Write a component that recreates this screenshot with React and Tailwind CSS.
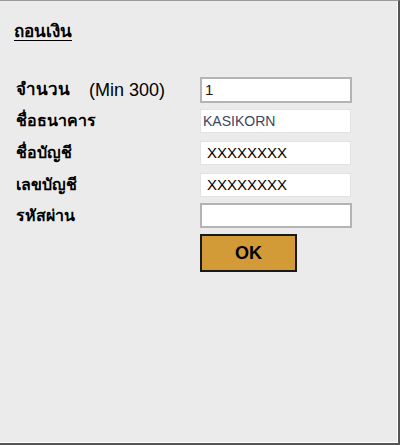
export default function App() {
  const font = { fontFamily: '"Liberation Sans", Tahoma, "Noto Sans", "DejaVu Sans", sans-serif' };
  return (
    <div
      className="w-[400px] h-[445px] bg-[#ebebeb] border-t border-t-[#9a9a9a] border-r-2 border-b-2 border-r-[#555] border-b-[#555] text-black"
      style={font}
    >
      <div className="w-full h-full border-r border-b border-white">
        <div className="pt-[19px] pl-[14px]">
          <span className="text-[17px] leading-[20px] font-bold underline underline-offset-[3px]">ถอนเงิน</span>
        </div>

        <div className="mt-[33px] flex flex-col">
          <Row label={<><span className="text-[17px]">จำนวน</span><span className="font-normal text-[18px] ml-[19px]">(Min 300)</span></>} h="h-[26px]">
            <div className="w-[152px] h-[26px] bg-white border-2 border-[#b4b4b4] pl-[3px] flex items-center text-[15px] text-[#2a0f0f]">1</div>
          </Row>
          <Row label="ชื่อธนาคาร" h="h-[24px]" mt="mt-[6px]">
            <div className="w-[151px] h-[24px] bg-white border border-[#e2e2e2] pl-[2px] flex items-center text-[14px] text-[#3b4763]">KASIKORN</div>
          </Row>
          <Row label="ชื่อบัญชี" h="h-[24px]" mt="mt-[8px]">
            <div className="w-[151px] h-[24px] bg-white border border-[#e2e2e2] pl-[6px] flex items-center text-[15px]">XXXXXXXX</div>
          </Row>
          <Row label="เลขบัญชี" h="h-[24px]" mt="mt-[8px]">
            <div className="w-[151px] h-[24px] bg-white border border-[#e2e2e2] pl-[6px] flex items-center text-[15px]">XXXXXXXX</div>
          </Row>
          <Row label="รหัสผ่าน" h="h-[25px]" mt="mt-[6px]">
            <div className="w-[152px] h-[25px] bg-white border-2 border-[#b4b4b4]"></div>
          </Row>
          <div className="mt-[6px] pl-[200px]">
            <button className="w-[97px] h-[38px] bg-[#d39a38] border-2 border-[#1a1a1a] text-[18px] font-bold flex items-center justify-center">
              OK
            </button>
          </div>
        </div>
      </div>
    </div>
  );
}

function Row({ label, children, h, mt = "" }) {
  return (
    <div className={`flex items-center ${h} ${mt}`}>
      <div className="w-[200px] pl-[16px] text-[16px] font-bold flex items-center">{label}</div>
      {children}
    </div>
  );
}
